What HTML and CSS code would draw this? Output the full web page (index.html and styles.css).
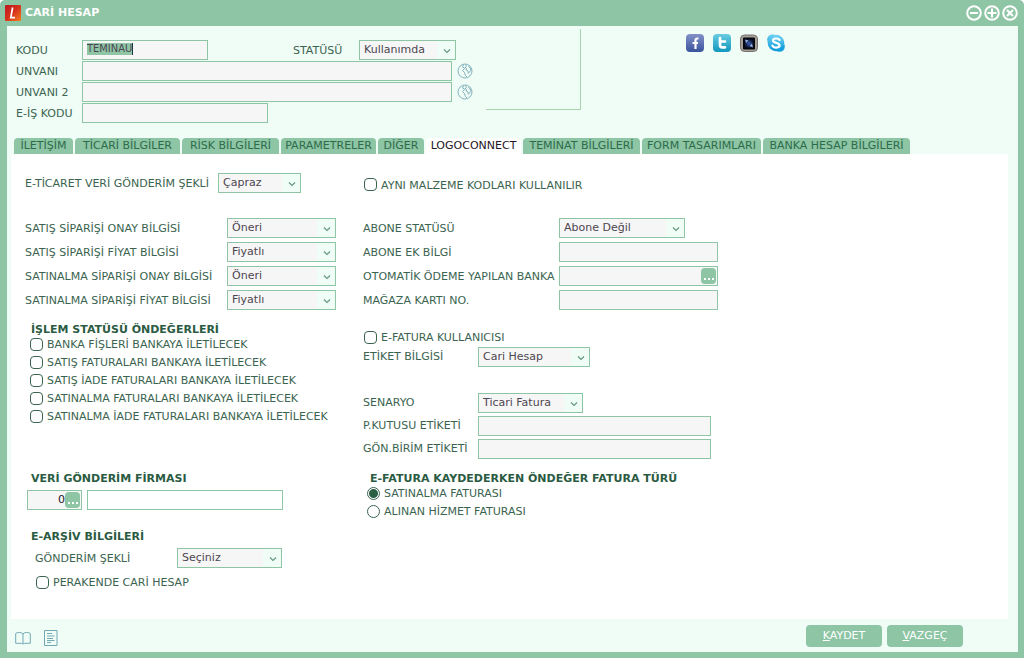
FILE: index.html
```html
<!DOCTYPE html>
<html lang="tr">
<head>
<meta charset="utf-8">
<title>CARİ HESAP</title>
<link rel="stylesheet" href="styles.css">
</head>
<body>
<form class="window">
  <header class="titlebar">
    <svg class="logo" viewBox="0 0 16 16" aria-hidden="true">
      <defs><linearGradient id="lg" x1="0" y1="0" x2="1" y2="1"><stop offset="0" stop-color="#b81722"/><stop offset=".5" stop-color="#d8301c"/><stop offset="1" stop-color="#f0801e"/></linearGradient></defs>
      <rect width="16" height="16" rx="1" fill="url(#lg)"/>
      <path d="M7.600 2.500 5.800 12.600H10" fill="none" stroke="#fff" stroke-width="1.700"/>
    </svg>
    <h1 class="title">CARİ HESAP</h1>
    <div class="window-buttons">
      <button type="button" class="icon-button" aria-label="Küçült"><svg viewBox="0 0 16 16"><circle cx="8" cy="8" r="6.800"/><path d="M4 8h8"/></svg></button>
      <button type="button" class="icon-button" aria-label="Büyüt"><svg viewBox="0 0 16 16"><circle cx="8" cy="8" r="6.800"/><path d="M3.500 8h9M8 3.500v9"/></svg></button>
      <button type="button" class="icon-button" aria-label="Kapat"><svg viewBox="0 0 16 16"><circle cx="8" cy="8" r="6.800"/><path d="m5 5 6 6m0-6-6 6" stroke-width="2.200"/></svg></button>
    </div>
  </header>

  <main class="content">
    <section class="summary">
      <div class="identity">
        <div class="row">
          <label class="label" for="kodu">KODU</label>
          <div class="field code"><input class="code-input" id="kodu" value="TEMİNAU"></div>
          <label class="label status-label" for="statu">STATÜSÜ</label>
          <select class="field w-status" id="statu"><option>Kullanımda</option></select>
        </div>
        <div class="row">
          <label class="label" for="unvan">UNVANI</label>
          <input class="field w-name" id="unvan">
          <button type="button" class="icon-button globe" aria-label="Dil"><svg viewBox="0 0 16 16"><circle cx="8" cy="8" r="7"/><path d="M6.500 1.500 5.500 4l2.300 1.300L5.500 7.500l2 2 .8 2.800L10 14M8.500 1.500l.8 2-1.500 1.800M9.500 5l-.4 2 1.900 1 .3 2.300 2.500-2.800-.6-2.600-1.900-1.500"/></svg></button>
        </div>
        <div class="row">
          <label class="label" for="unvan2">UNVANI 2</label>
          <input class="field w-name" id="unvan2">
          <button type="button" class="icon-button globe" aria-label="Dil"><svg viewBox="0 0 16 16"><circle cx="8" cy="8" r="7"/><path d="M6.500 1.500 5.500 4l2.300 1.300L5.500 7.500l2 2 .8 2.800L10 14M8.500 1.500l.8 2-1.500 1.800M9.500 5l-.4 2 1.900 1 .3 2.300 2.500-2.800-.6-2.600-1.900-1.500"/></svg></button>
        </div>
        <div class="row">
          <label class="label" for="eis">E-İŞ KODU</label>
          <input class="field w-eis" id="eis">
        </div>
      </div>
      <div class="picture"></div>
      <nav class="social">
        <a href="#" aria-label="Facebook"><svg viewBox="0 0 18 18"><defs><linearGradient id="fb" x2="0" y2="1"><stop stop-color="#8491c8"/><stop offset="1" stop-color="#38539d"/></linearGradient></defs><rect width="18" height="18" rx="4" fill="url(#fb)"/><path d="M12.500 4.500h-1.200c-1.400 0-1.800.8-1.800 2V15M6.500 9h5.500" fill="none" stroke="#fff" stroke-width="2.200"/></svg></a>
        <a href="#" aria-label="Twitter"><svg viewBox="0 0 18 18"><defs><linearGradient id="tw" x2="0" y2="1"><stop stop-color="#68cce0"/><stop offset="1" stop-color="#1296bd"/></linearGradient></defs><rect width="18" height="18" rx="4" fill="url(#tw)"/><path d="M7 4v7c0 1.700.8 2.300 2.200 2.300H12M7 7.500h5" fill="none" stroke="#fff" stroke-width="2.700" stroke-linecap="round"/></svg></a>
        <a href="#" aria-label="Foursquare"><svg viewBox="0 0 18 18"><defs><radialGradient id="sq"><stop stop-color="#3c60b8"/><stop offset="1" stop-color="#080d22"/></radialGradient></defs><rect x=".5" y="1" width="17" height="16.500" rx="4" fill="#a59f99" stroke="#77726e"/><rect x="3" y="3.500" width="12" height="12" rx="1" fill="#05070d"/><rect x="4.500" y="5" width="9" height="9" fill="url(#sq)"/><path d="m5 5.500 3.500 1L6 9zM13 13.500 9.500 12l2.500-2.500z" fill="#93b2e4"/></svg></a>
        <a href="#" aria-label="Skype"><svg viewBox="0 0 18 18"><defs><linearGradient id="sk" x2="0" y2="1"><stop stop-color="#74d3f3"/><stop offset="1" stop-color="#0797d9"/></linearGradient></defs><circle cx="5.500" cy="5.500" r="5.300" fill="url(#sk)"/><circle cx="12.500" cy="12.500" r="5.300" fill="#109fdd"/><circle cx="9" cy="9" r="8.300" fill="url(#sk)"/><path d="M12.600 6.100C11.500 3.900 6 3.900 6 6.600c0 2.900 6.600 1.600 6.600 4.700 0 2.900-6 3-7.200.3" fill="none" stroke="#fff" stroke-width="2.200" stroke-linecap="round"/></svg></a>
      </nav>
    </section>

    <nav class="tabs">
      <button type="button" class="tab">İLETİŞİM</button>
      <button type="button" class="tab">TİCARİ BİLGİLER</button>
      <button type="button" class="tab">RİSK BİLGİLERİ</button>
      <button type="button" class="tab">PARAMETRELER</button>
      <button type="button" class="tab">DİĞER</button>
      <button type="button" class="tab active">LOGOCONNECT</button>
      <button type="button" class="tab">TEMİNAT BİLGİLERİ</button>
      <button type="button" class="tab">FORM TASARIMLARI</button>
      <button type="button" class="tab">BANKA HESAP BİLGİLERİ</button>
    </nav>

    <section class="panel">
      <div class="column">
        <div class="row trade">
          <label class="label" for="eticaret">E-TİCARET VERİ GÖNDERİM ŞEKLİ</label>
          <select class="field w-cross" id="eticaret"><option>Çapraz</option></select>
        </div>
        <div class="group orders">
          <div class="row"><label class="label" for="o1">SATIŞ SİPARİŞİ ONAY BİLGİSİ</label><select class="field w-order" id="o1"><option>Öneri</option></select></div>
          <div class="row"><label class="label" for="o2">SATIŞ SİPARİŞİ FİYAT BİLGİSİ</label><select class="field w-order" id="o2"><option>Fiyatlı</option></select></div>
          <div class="row"><label class="label" for="o3">SATINALMA SİPARİŞİ ONAY BİLGİSİ</label><select class="field w-order" id="o3"><option>Öneri</option></select></div>
          <div class="row"><label class="label" for="o4">SATINALMA SİPARİŞİ FİYAT BİLGİSİ</label><select class="field w-order" id="o4"><option>Fiyatlı</option></select></div>
        </div>
        <div class="defaults">
          <h2 class="heading">İŞLEM STATÜSÜ ÖNDEĞERLERİ</h2>
          <label class="option"><input type="checkbox"><span>BANKA FİŞLERİ BANKAYA İLETİLECEK</span></label>
          <label class="option"><input type="checkbox"><span>SATIŞ FATURALARI BANKAYA İLETİLECEK</span></label>
          <label class="option"><input type="checkbox"><span>SATIŞ İADE FATURALARI BANKAYA İLETİLECEK</span></label>
          <label class="option"><input type="checkbox"><span>SATINALMA FATURALARI BANKAYA İLETİLECEK</span></label>
          <label class="option"><input type="checkbox"><span>SATINALMA İADE FATURALARI BANKAYA İLETİLECEK</span></label>
        </div>
        <div class="firm">
          <h2 class="heading">VERİ GÖNDERİM FİRMASI</h2>
          <div class="row firm-row">
            <div class="field lookup w-firm"><input class="lookup-input number" aria-label="Firma no" value="0"><button type="button" class="more" aria-label="Seç"><svg viewBox="0 0 15 16"><path d="M3 10h2v2H3zm4 0h2v2H7zm4 0h2v2h-2z"/></svg></button></div>
            <input class="field plain w-firm-name" aria-label="Firma adı">
          </div>
        </div>
        <div class="archive">
          <h2 class="heading">E-ARŞİV BİLGİLERİ</h2>
          <div class="row archive-row"><label class="label" for="gonderim">GÖNDERİM ŞEKLİ</label><select class="field w-scenario" id="gonderim"><option>Seçiniz</option></select></div>
          <label class="option retail"><input type="checkbox"><span>PERAKENDE CARİ HESAP</span></label>
        </div>
      </div>

      <div class="column">
        <label class="option same-codes"><input type="checkbox"><span>AYNI MALZEME KODLARI KULLANILIR</span></label>
        <div class="group subscriber">
          <div class="row"><label class="label" for="a1">ABONE STATÜSÜ</label><select class="field w-sub" id="a1"><option>Abone Değil</option></select></div>
          <div class="row"><label class="label" for="a2">ABONE EK BİLGİ</label><input class="field w-bank" id="a2"></div>
          <div class="row"><label class="label" for="a3">OTOMATİK ÖDEME YAPILAN BANKA</label><div class="field lookup w-bank"><input class="lookup-input" id="a3"><button type="button" class="more" aria-label="Seç"><svg viewBox="0 0 15 16"><path d="M3 10h2v2H3zm4 0h2v2H7zm4 0h2v2h-2z"/></svg></button></div></div>
          <div class="row"><label class="label" for="a4">MAĞAZA KARTI NO.</label><input class="field w-bank" id="a4"></div>
        </div>
        <div class="einvoice">
          <label class="option"><input type="checkbox"><span>E-FATURA KULLANICISI</span></label>
          <div class="row tag-row"><label class="label" for="e1">ETİKET BİLGİSİ</label><select class="field w-tag" id="e1"><option>Cari Hesap</option></select></div>
        </div>
        <div class="group scenario">
          <div class="row"><label class="label" for="s1">SENARYO</label><select class="field w-scenario" id="s1"><option>Ticari Fatura</option></select></div>
          <div class="row"><label class="label" for="s2">P.KUTUSU ETİKETİ</label><input class="field w-box" id="s2"></div>
          <div class="row"><label class="label" for="s3">GÖN.BİRİM ETİKETİ</label><input class="field w-box" id="s3"></div>
        </div>
        <div class="invoice-type">
          <h2 class="heading">E-FATURA KAYDEDERKEN ÖNDEĞER FATURA TÜRÜ</h2>
          <label class="option"><input type="radio" name="tur" checked><span>SATINALMA FATURASI</span></label>
          <label class="option"><input type="radio" name="tur"><span>ALINAN HİZMET FATURASI</span></label>
        </div>
      </div>
    </section>

    <footer class="footer">
      <button type="button" class="icon-button tool" aria-label="Defter"><svg viewBox="0 0 16 16"><path d="M8 4v9.500M8 4C7 2 2 2 .7 3.500v9.800h5.600L8 14l1.700-.7h5.600V3.500C14 2 9 2 8 4z"/></svg></button>
      <button type="button" class="icon-button tool" aria-label="Notlar"><svg viewBox="0 0 16 16"><path d="M1.500.5h12.500v15H1.500zM4 3.500h5M4 6h7.500M4 8.500h6M4 10.500h7.500M4 12.500h4"/></svg></button>
      <div class="actions">
        <button type="button" class="action"><u>K</u>AYDET</button>
        <button type="button" class="action"><u>V</u>AZGEÇ</button>
      </div>
    </footer>
  </main>
</form>
</body>
</html>
```
FILE: styles.css
```css
* { box-sizing: border-box; }
body {
  margin: 0;
  background: #fff;
  color: #3b6450;
  font: 11px/14px "DejaVu Sans", sans-serif;
}
button, input, select { margin: 0; font: inherit; color: inherit; }
h1, h2 { margin: 0; font-size: 11px; }
.window {
  display: flex;
  flex-direction: column;
  min-height: 100vh;
  padding: 0 6px 6px 7px;
  background: #8dc5a5;
  border-radius: 5px 5px 0 0;
}
.titlebar { display: flex; align-items: center; height: 26px; margin-left: -2px; }
.logo { width: 16px; height: 16px; }
.title { margin-left: 4px; color: #fff; }
.window-buttons { display: flex; gap: 2px; margin-left: auto; }
.icon-button {
  display: block;
  width: 16px;
  height: 16px;
  padding: 0;
  border: 0;
  background: none;
}
.icon-button svg { display: block; width: 16px; height: 16px; fill: none; stroke: #fff; stroke-width: 2; }
.content { display: flex; flex: 1; flex-direction: column; background: #f0fcf6; }

.row { display: flex; align-items: center; }
.label { flex: none; padding-top: 2px; white-space: nowrap; }
.field {
  flex: none;
  height: 20px;
  padding: 0 5px;
  border: 1px solid #8dc5a5;
  border-radius: 0;
  background: #f6f6f6;
  color: #4d4650;
  outline: none;
}
select.field {
  padding: 0 20px 1px 4px;
  appearance: none;
  background:
    url("data:image/svg+xml,%3Csvg xmlns='http://www.w3.org/2000/svg' width='8' height='5'%3E%3Cpath d='M1 .5l3 3 3-3' fill='none' stroke='%23649880' stroke-width='1.2'/%3E%3C/svg%3E") no-repeat right 4px top 8px,
    linear-gradient(#f0fcf6, #f0fcf6) no-repeat right / 18px 100%,
    #f6f6f6;
}
.field.plain { background: #fff; }

.summary { display: flex; height: 112px; }
.identity { display: flex; flex-direction: column; gap: 1px; width: 479px; padding: 14px 0 0 9px; }
.identity .label { width: 66px; }
.code { display: flex; align-items: center; width: 126px; padding: 0 4px 2px; }
.code-input {
  field-sizing: content;
  height: 12px;
  padding: 0;
  border: 0;
  border-right: 1px solid #234;
  background: #8dc5a5;
  font-family: "DejaVu Sans Condensed", "DejaVu Sans", sans-serif;
  outline: none;
}
.status-label { margin-left: 85px; }
.w-status { width: 97px; }
.w-name { width: 370px; }
.w-eis { width: 186px; }
.globe { margin-left: 5px; }
.globe svg { stroke: #83b3bd; stroke-width: 1; }
.picture {
  width: 95px;
  height: 81px;
  margin-top: 3px;
  border: solid #a9d3af;
  border-width: 0 1px 1px 0;
}
.social { display: flex; gap: 9px; margin: 8px 0 0 105px; }
.social a, .social svg { display: block; width: 18px; height: 18px; }

.tabs {
  display: grid;
  grid-template-columns: 59fr 105fr 97fr 95fr 46fr 95fr 117fr 119fr 147fr;
  gap: 2px;
  max-width: 903px;
  padding-left: 7px;
}
.tab {
  height: 16px;
  padding: 0;
  border: 0;
  border-radius: 4px 4px 0 0;
  background: #8dc5a5;
  color: #2d6c4b;
  line-height: 16px;
  white-space: nowrap;
}
.tab.active { background: #fff; color: #221525; }

.panel {
  display: grid;
  flex: 1;
  grid-template-columns: 338px 1fr;
  margin: 0 10px 0 4px;
  padding: 19px 0 27px 14px;
  background: #fff;
}
.group { display: flex; flex-direction: column; gap: 4px; }
.trade .label { width: 193px; }
.w-cross { width: 83px; }
.orders, .subscriber { margin-top: 25px; }
.orders .label { width: 202px; }
.w-order { width: 109px; }
.heading { height: 12px; margin-left: 6px; line-height: 14px; color: #2b5b42; }
.option { display: flex; align-items: center; gap: 4px; height: 18px; }
.option span { padding-top: 2px; }
.option input {
  flex: none;
  width: 13px;
  height: 13px;
  appearance: none;
  border: 1px solid #3b6450;
  border-radius: 4px;
  background: #fff;
}
.option input[type="radio"] { border-radius: 50%; }
.option input:checked { background: radial-gradient(circle, #2b5f44 4px, #fff 5px); }
.defaults { margin-top: 13px; padding-left: 5px; }
.defaults .heading { margin-left: 1px; }
.firm { margin-top: 47px; }
.firm-row { gap: 5px; margin: 6px 0 0 2px; }
.lookup { display: flex; align-items: center; padding: 0 1px; }
.lookup-input { flex: 1; min-width: 0; padding: 0; border: 0; background: none; outline: none; }
.number { text-align: right; color: #221525; }
.more {
  width: 15px;
  height: 16px;
  padding: 0;
  border: 0;
  border-radius: 4px;
  background: #8dc5a5;
}
.more svg { display: block; width: 15px; height: 16px; fill: #fff; }
.w-firm { width: 55px; }
.w-firm-name { width: 196px; }
.archive { margin-top: 20px; }
.archive-row { margin: 6px 0 0 10px; }
.archive-row .label { width: 142px; }
.retail { margin: 5px 0 0 11px; }
.same-codes { height: 20px; padding: 3px 0 0 1px; }
.subscriber .label { width: 196px; }
.w-sub { width: 126px; }
.w-bank { width: 159px; }
.einvoice { margin-top: 18px; }
.einvoice .option { padding-left: 1px; }
.tag-row { margin-top: 1px; }
.einvoice .label, .scenario .label { width: 115px; padding-top: 0; }
.w-tag { width: 112px; }
.scenario { gap: 3px; margin-top: 26px; }
.w-scenario { width: 105px; }
.w-box { width: 233px; }
.invoice-type { margin-top: 13px; padding-left: 4px; }
.invoice-type .heading { margin-left: 3px; }

.footer { display: flex; align-items: center; gap: 12px; height: 33px; padding: 0 55px 0 8px; }
.tool { margin-top: 4px; }
.tool svg { stroke: #72a9b5; stroke-width: 1; }
.actions { display: flex; gap: 5px; margin-left: auto; }
.action {
  width: 76px;
  height: 22px;
  padding: 0;
  border: 0;
  border-radius: 4px;
  background: #8dc5a5;
  color: #fff;
}
```
